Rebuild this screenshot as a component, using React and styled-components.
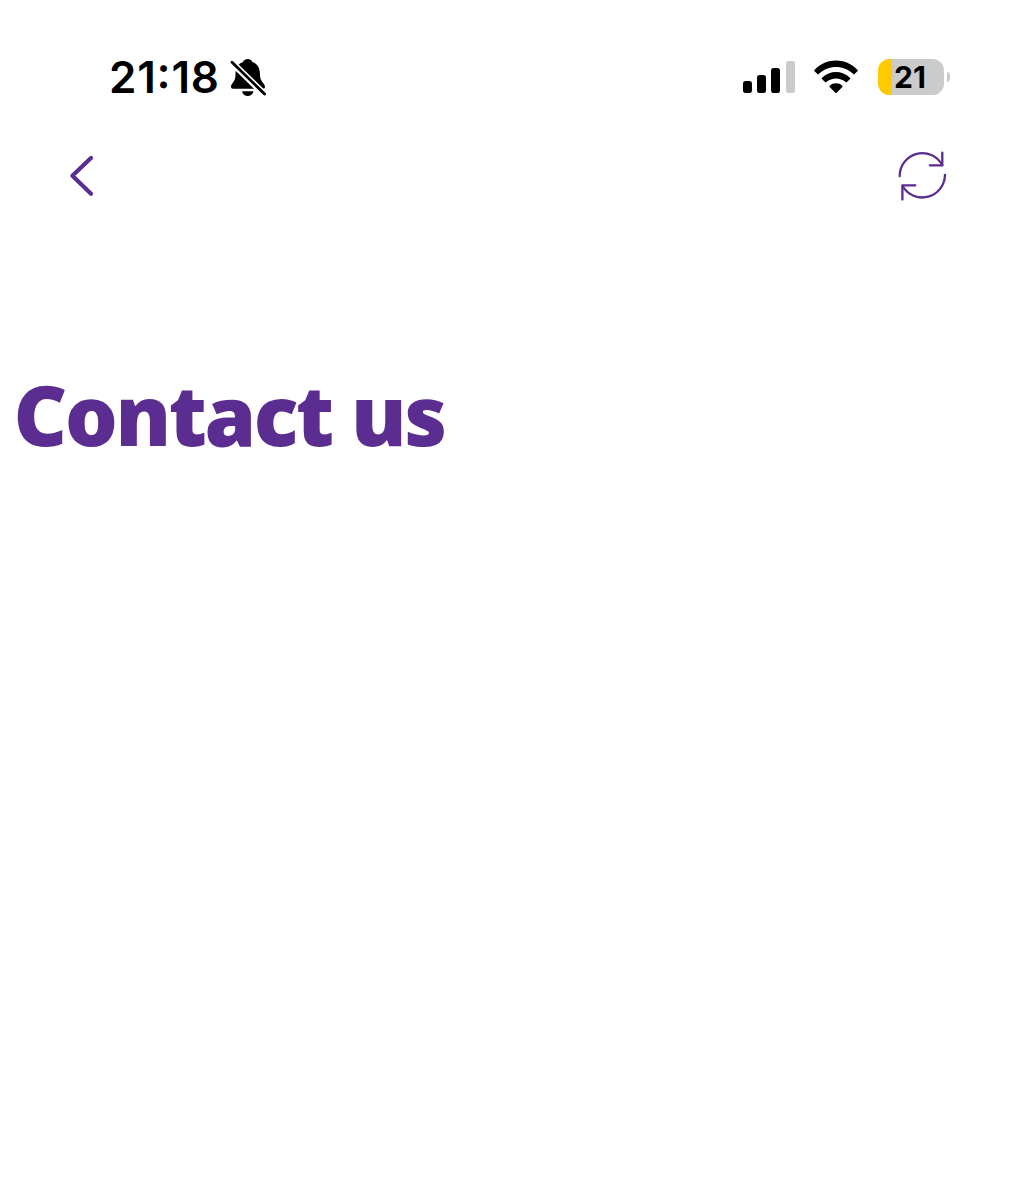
import React from 'react'
import styled, { createGlobalStyle } from 'styled-components';

const GlobalStyle = createGlobalStyle`
body{
  margin: 0;
  background-color: #fff;
}
`
const Screen = styled.div`
min-height: 1200px;
font-family: Inter, "Liberation Sans", sans-serif;
overflow: hidden;
`
const StatusBar = styled.header`
display: flex;
justify-content: space-between;
height: 38px;
padding: 58px 86px 0 109px;
color: #000;
`
const Group = styled.div`
display: flex;
align-items: flex-start;
`
const Time = styled.span`
width: 121px;
font-size: 44px;
font-weight: 600;
line-height: 38px;
letter-spacing: 0.8px;
font-feature-settings: "case" 1;
white-space: nowrap;
`
const Signal = styled.div`
display: flex;
align-items: flex-end;
gap: 5.3px;
height: 35px;
margin-right: 19px;
`
const Bar = styled.span`
width: 8.9px;
height: ${props => props.$height}px;
border-radius: 2.8px;
background-color: ${props => props.$off ? '#cbcbcb' : '#000'};
`
const Battery = styled.div`
display: flex;
align-items: center;
justify-content: center;
box-sizing: border-box;
width: 66px;
height: 36px;
margin: 1px 2.5px 0 19.5px;
padding-right: 2px;
border-radius: 11.5px;
background: linear-gradient(90deg, #fecb02 14.5px, #cbcbcb 14.5px);
font-size: 30px;
font-weight: 700;
line-height: 36px;
`
const BatteryTip = styled.span`
width: 3.5px;
height: 10px;
margin-top: 14px;
border-radius: 0 4px 4px 0 / 0 5px 5px 0;
background-color: #cbcbcb;
`
const NavBar = styled.nav`
display: flex;
justify-content: space-between;
align-items: center;
height: 56px;
padding: 52px 88px 0 68px;
`
const IconButton = styled.button`
display: flex;
padding: 0;
border: none;
background: none;
color: #5c2d91;
cursor: pointer;
`
const Title = styled.h1`
margin: 150px 0 0 13.5px;
color: #5c2d91;
font-family: "Noto Sans", "Open Sans", sans-serif;
font-size: 83px;
font-weight: 900;
line-height: 120px;
letter-spacing: -2.4px;
white-space: nowrap;
`

const BellOff = () => (
  <svg width="38" height="40" viewBox="230 58 38 40">
    <path d="M231 87C231 83 235.500 82 235.500 75C235.500 67 238.500 63.500 243 62C244 59.800 245.600 59 247.700 59C249.800 59 251.400 59.800 252.400 62C257 63.500 260 67 260 75C260 82 265 83 265 87Q265 88.800 263 88.800H233Q231 88.800 231 87Z" fill="#000" />
    <path d="M242 91.300H253.500C253 94.300 250.500 96 247.700 96S242.500 94.300 242 91.300Z" fill="#000" />
    <path d="M231.500 62.200L265 94.800" stroke="#fff" strokeWidth="6.600" />
    <path d="M232 62.300L264.600 94" stroke="#000" strokeWidth="2.800" strokeLinecap="round" />
  </svg>
)

const Wifi = () => (
  <svg width="45" height="36" viewBox="814 58 45 36">
    <path d="M814.400 69.900C826.500 57.300 845.500 57.300 857.600 69.900Q858.200 70.500 857.600 71.100L854.600 74.100Q854 74.700 853.400 74.100C843.500 64.500 828.500 64.500 818.600 74.100Q818 74.700 817.400 74.100L814.400 71.100Q813.800 70.500 814.400 69.900Z" fill="#000" />
    <path d="M822 77.700C829.800 70 842.200 70 850 77.700Q850.700 78.400 850 79.100L847 82.100Q846.400 82.700 845.700 82.100C840.300 77.200 831.700 77.200 826.300 82.100Q825.600 82.700 825 82.100L822 79.100Q821.300 78.400 822 77.700Z" fill="#000" />
    <path d="M829.700 85.700C833.300 82.500 838.700 82.500 842.300 85.700Q843 86.400 842.300 87.100L836.700 92.700Q836 93.400 835.300 92.700L829.700 87.100Q829 86.400 829.700 85.700Z" fill="#000" />
  </svg>
)

const ChevronLeft = () => (
  <svg width="28" height="44" viewBox="68 154 28 44" fill="none">
    <path d="M91 158L72.400 175.800L91 193.700" stroke="currentColor" strokeWidth="4.200" strokeLinecap="round" strokeLinejoin="round" />
  </svg>
)

const Refresh = () => (
  <svg width="52" height="54" viewBox="896 149 52 54" fill="none" stroke="currentColor" strokeWidth="2.300" strokeLinecap="round" strokeLinejoin="round">
    <path d="M899.700 176.300A22.600 22.800 0 0 1 942.300 165.300" />
    <path d="M942.300 152.600V165.300H929.800" />
    <path d="M945 174.800A22.700 22.800 0 0 1 902.600 186" />
    <path d="M915.300 185.300H902.400V199.600" />
  </svg>
)

const bars = [12, 18, 25.5, 32.5]

export default function App(){
    return(
    <Screen>
       <GlobalStyle />
       <StatusBar>
         <Group>
           <Time>21:18</Time>
           <BellOff />
         </Group>
         <Group>
           <Signal>
             {bars.map((height, i) => <Bar key={height} $height={height} $off={i === 3} />)}
           </Signal>
           <Wifi />
           <Battery>21</Battery>
           <BatteryTip />
         </Group>
       </StatusBar>
       <NavBar>
         <IconButton aria-label="Back"><ChevronLeft /></IconButton>
         <IconButton aria-label="Refresh"><Refresh /></IconButton>
       </NavBar>
       <Title>Contact us</Title>
    </Screen>
    )
}
